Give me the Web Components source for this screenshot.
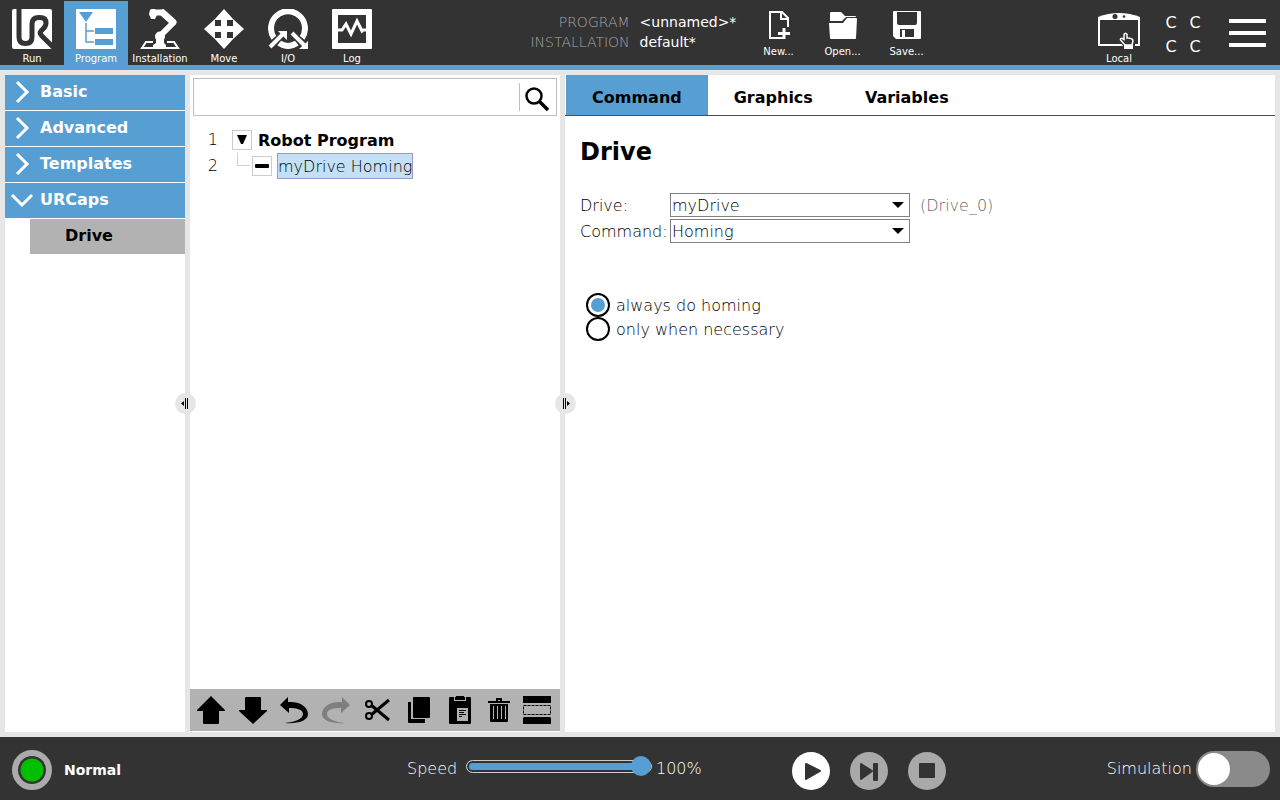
<!DOCTYPE html>
<html lang="en">
<head>
<meta charset="utf-8">
<title>Program - Drive</title>
<style>
  html, body {
    height: 100%;
    margin: 0;
  }
  body {
    --blue: #579fd3;
    --dark: #333333;
    --grey: #b2b2b2;
    --panel-bg: #e6e6e6;
    font-family: "DejaVu Sans", sans-serif;
    font-size: 16px;
    line-height: 20px;
    color: #000;
  }
</style>
</head>
<body>
<robot-app></robot-app>

<script>
// One tab of the main navigation: icon slot + caption
class NavTab extends HTMLElement {
  connectedCallback() {
    this.attachShadow({ mode: 'open' });
    this.shadowRoot.innerHTML = `
      <style>
        :host {
          display: block;
          width: 64px;
        }
        button {
          display: flex;
          flex-direction: column;
          align-items: center;
          width: 100%;
          height: 100%;
          border: 0;
          padding: 8px 0 0;
          background: none;
          color: #fff;
          font: 10px/12px "DejaVu Sans", sans-serif;
          white-space: nowrap;
          cursor: pointer;
        }
        :host([active]) button {
          background: var(--blue);
        }
        .icon {
          flex-shrink: 0;
          height: 44px;
        }
        :host([small]) .icon {
          height: 37px;
        }
      </style>
      <button type="button"><span class="icon"><slot name="icon"></slot></span><slot></slot></button>
    `;
  }
}
customElements.define('nav-tab', NavTab);

class AppHeader extends HTMLElement {
  connectedCallback() {
    this.attachShadow({ mode: 'open' });
    this.shadowRoot.innerHTML = `
      <style>
        :host {
          display: flex;
          justify-content: space-between;
          height: 64px;
          padding: 1px 1px 0 0;
          background: var(--dark);
          border-bottom: 5px solid var(--blue);
          color: #fff;
        }
        nav, .middle, .right {
          display: flex;
        }
        .middle {
          padding-right: 2px;
        }
        svg {
          display: block;
        }
        .info {
          display: grid;
          grid-template-columns: auto minmax(107px, auto);
          grid-auto-rows: 20px;
          column-gap: 10px;
          margin: 0;
          padding-top: 11px;
          font-size: 14px;
          font-weight: 200;
        }
        dt {
          color: #a6a6a6;
          text-align: right;
        }
        dd {
          margin: 0;
          font-weight: 400;
        }
        .checksum {
          display: grid;
          grid-template-columns: 24px 24px;
          grid-auto-rows: 24px;
          place-content: center;
          padding-top: 3px;
          place-items: center;
          width: 64px;
          box-sizing: border-box;
        }
        .menu {
          width: 64px;
          border: 0;
          padding: 0;
          background: none;
          display: grid;
          place-items: center;
          cursor: pointer;
        }
      </style>
      <nav>
        <nav-tab>
          <svg slot="icon" width="40" height="40" viewBox="0 0 40 40">
            <rect width="40" height="40" rx="2" fill="#fff"/>
            <path d="M7 0V28Q7 34.500 13.500 34.500T20 28V15Q20 8.500 27 8.500H28Q34 8.500 34 14Q34 17 31 20L29 22Q27 24.500 30 27L41 38" fill="none" stroke="#333" stroke-width="5"/>
          </svg>Run
        </nav-tab>
        <nav-tab active>
          <svg slot="icon" width="40" height="40" viewBox="0 0 40 40">
            <rect width="40" height="40" fill="#fff"/>
            <path d="M3 3H17L10 13Z" fill="#579fd3"/>
            <path d="M10 14V33H18M10 22H18" fill="none" stroke="#579fd3" stroke-width="1.500"/>
            <path d="M19 19H37V25H19ZM19 30H37V36H19Z" fill="#579fd3"/>
          </svg>Program
        </nav-tab>
        <nav-tab>
          <svg slot="icon" width="40" height="40" viewBox="0 0 40 40">
            <path d="M13 33H6L2 39H38L34 33H27" fill="none" stroke="#fff" stroke-width="2"/>
            <path d="M13 3.500H24" stroke="#fff" stroke-width="6"/>
            <path d="M10 1Q12 -1 15 0L17 6L15 10H11L9 5Z" fill="#fff"/>
            <path d="M23 4L33 13" stroke="#fff" stroke-width="7" stroke-linecap="round"/>
            <path d="M33 14L20 27" stroke="#fff" stroke-width="6" stroke-linecap="round"/>
            <circle cx="20" cy="27.500" r="5" fill="#fff"/>
            <path d="M16 28H24V34L26 36V39H13V36L16 34Z" fill="#fff"/>
          </svg>Installation
        </nav-tab>
        <nav-tab>
          <svg slot="icon" width="40" height="40" viewBox="0 0 40 40">
            <path d="M20 0L30 11H10ZM20 40L10 29H30ZM0 20L11 10V30ZM40 20L29 30V10Z" fill="#fff"/>
            <path d="M20 8V32M8 20H32" stroke="#fff" stroke-width="6"/>
          </svg>Move
        </nav-tab>
        <nav-tab>
          <svg slot="icon" width="40" height="40" viewBox="0 0 40 40">
            <path d="M6 29A17 17 0 1 1 34 29M11 34Q20 40 29 34" fill="none" stroke="#fff" stroke-width="6"/>
            <path d="M2 38L13 27M24 24L35 35" stroke="#333" stroke-width="7"/>
            <path d="M2 38L15 25M24 24L36 36" stroke="#fff" stroke-width="4"/>
            <path d="M10 22H19V31ZM40 32V40H31Z" fill="#fff"/>
          </svg>I/O
        </nav-tab>
        <nav-tab>
          <svg slot="icon" width="40" height="40" viewBox="0 0 40 40">
            <rect width="40" height="40" rx="1" fill="#fff"/>
            <rect x="6" y="6" width="28" height="28" fill="#333"/>
            <path d="M5 21H10L14 15L19 25L25 12L30 22L31 21H35" fill="none" stroke="#fff" stroke-width="3"/>
          </svg>Log
        </nav-tab>
      </nav>
      <div class="middle">
        <dl class="info">
          <dt>PROGRAM</dt><dd>&lt;unnamed&gt;*</dd>
          <dt>INSTALLATION</dt><dd>default*</dd>
        </dl>
        <nav-tab small>
          <svg slot="icon" width="28" height="34" viewBox="0 0 28 34">
            <path d="M18 29H5V3H17L23 9V18" fill="none" stroke="#fff" stroke-width="2"/>
            <path d="M16 3V10H23" fill="none" stroke="#fff" stroke-width="2"/>
            <path d="M19 19V30M13 24.500H25" stroke="#fff" stroke-width="3"/>
          </svg>New...
        </nav-tab>
        <nav-tab small>
          <svg slot="icon" width="28" height="34" viewBox="0 0 28 34">
            <path d="M1 4Q1 3 2 3H12L16 7H26Q27 7 27 8L17 8L13 12H1Z" fill="#fff"/>
            <path d="M0 14H14L18 9H27Q28 9 28 10L27 29Q27 30 26 30H2Q1 30 1 29Z" fill="#fff"/>
          </svg>Open...
        </nav-tab>
        <nav-tab small>
          <svg slot="icon" width="28" height="34" viewBox="0 0 28 34">
            <path d="M0 3Q0 2 1 2H27Q28 2 28 3V29Q28 30 27 30H3L0 27Z" fill="#fff"/>
            <path d="M4 3H24V14Q24 16 22 16H6Q4 16 4 14ZM7 20H21V28H7Z" fill="#333"/>
            <rect x="9" y="21" width="3" height="7" fill="#fff"/>
          </svg>Save...
        </nav-tab>
      </div>
      <div class="right">
        <nav-tab>
          <svg slot="icon" width="42" height="40" viewBox="0 0 42 40">
            <path d="M0 8Q10 4 21 4T42 8V11H0Z" fill="#fff"/>
            <path d="M1 9V36H41V9" fill="none" stroke="#fff" stroke-width="2"/>
            <circle cx="17" cy="7.500" r="2.500" fill="#333"/>
            <circle cx="26" cy="7.500" r="1.300" fill="#333"/>
            <path d="M27 38L22 31L23 28L25 28V25Q27 22 30 25V28L36 31V36L34 38Z" fill="#333" stroke="#333" stroke-width="2"/>
            <path d="M27 36L22.500 31Q22 28 26 30.500V25.500Q27.500 23 29 25.500V29Q35 29 35 32L34 36Z" fill="#333" stroke="#fff" stroke-width="1.500"/>
            <path d="M26 36H35V40H26Z" fill="#fff"/>
          </svg>Local
        </nav-tab>
        <div class="checksum"><span>C</span><span>C</span><span>C</span><span>C</span></div>
        <button class="menu" type="button" aria-label="Menu">
          <svg width="37" height="28" viewBox="0 0 37 28">
            <path d="M0 2H37M0 14H37M0 26H37" stroke="#fff" stroke-width="4"/>
          </svg>
        </button>
      </div>
    `;
  }
}
customElements.define('app-header', AppHeader);

class NodeGroup extends HTMLElement {
  connectedCallback() {
    this.attachShadow({ mode: 'open' });
    this.shadowRoot.innerHTML = `
      <style>
        :host {
          display: block;
          margin-bottom: 1px;
        }
        button {
          display: flex;
          align-items: center;
          gap: 6px;
          width: 100%;
          height: 35px;
          border: 0;
          padding: 0 0 2px 5px;
          background: var(--blue);
          color: #fff;
          font: bold 16px/20px "DejaVu Sans", sans-serif;
          cursor: pointer;
        }
        :host([open]) svg {
          transform: rotate(90deg);
        }
      </style>
      <button type="button">
        <svg width="24" height="24" viewBox="0 0 24 24">
          <path d="M7 2L17 12L7 22" fill="none" stroke="#fff" stroke-width="3"/>
        </svg><slot></slot>
      </button>
    `;
  }
}
customElements.define('node-group', NodeGroup);

class NodeSidebar extends HTMLElement {
  connectedCallback() {
    this.attachShadow({ mode: 'open' });
    this.shadowRoot.innerHTML = `
      <style>
        :host {
          display: block;
          background: #fff;
        }
        .node {
          display: block;
          box-sizing: border-box;
          width: calc(100% - 25px);
          height: 35px;
          margin-left: 25px;
          border: 0;
          padding: 0 0 2px 35px;
          background: var(--grey);
          color: #000;
          font: bold 16px/20px "DejaVu Sans", sans-serif;
          text-align: left;
          cursor: pointer;
        }
      </style>
      <node-group>Basic</node-group>
      <node-group>Advanced</node-group>
      <node-group>Templates</node-group>
      <node-group open>URCaps</node-group>
      <button class="node" type="button">Drive</button>
    `;
  }
}
customElements.define('node-sidebar', NodeSidebar);

class TreeToolbar extends HTMLElement {
  connectedCallback() {
    this.attachShadow({ mode: 'open' });
    this.shadowRoot.innerHTML = `
      <style>
        :host {
          display: flex;
          justify-content: space-between;
          align-items: center;
          height: 42px;
          padding: 0 9px 0 7px;
          background: var(--grey);
        }
        button {
          border: 0;
          padding: 0;
          background: none;
          color: #000;
          cursor: pointer;
        }
        button:disabled {
          color: #7f7f7f;
        }
        svg {
          display: block;
          fill: currentColor;
        }
      </style>
      <button type="button" aria-label="Move up">
        <svg width="28" height="28" viewBox="0 0 28 28"><path d="M14 0L28 14V15H22V27Q22 28 21 28H7Q6 28 6 27V15H0V14Z"/></svg>
      </button>
      <button type="button" aria-label="Move down">
        <svg width="28" height="28" viewBox="0 0 28 28"><path d="M14 28L0 15V14H6V2Q6 1 7 1H21Q22 1 22 2V14H28V15Z"/></svg>
      </button>
      <button type="button" aria-label="Undo">
        <svg width="28" height="28" viewBox="0 0 28 28"><path d="M0 9L8 1V6C20 5 28 11 28 18C28 25 17 28 5 27C15 26 23 23 23 18C23 13 16 12 9 12V17Z"/></svg>
      </button>
      <button type="button" aria-label="Redo" disabled>
        <svg width="28" height="28" viewBox="0 0 28 28"><path d="M28 9L20 1V6C8 5 0 11 0 18C0 25 11 28 23 27C13 26 5 23 5 18C5 13 12 12 19 12V17Z"/></svg>
      </button>
      <button type="button" aria-label="Cut">
        <svg width="28" height="28" viewBox="0 0 28 28">
          <path d="M8 9L26 24M8 19L26 4" stroke="currentColor" stroke-width="3"/>
          <circle cx="6" cy="8" r="3" fill="none" stroke="currentColor" stroke-width="2"/>
          <circle cx="6" cy="20" r="3" fill="none" stroke="currentColor" stroke-width="2"/>
        </svg>
      </button>
      <button type="button" aria-label="Copy">
        <svg width="28" height="28" viewBox="0 0 28 28"><path d="M8 2Q8 1 9 1H24Q25 1 25 2V21Q25 22 24 22H9Q8 22 8 21ZM3 6H6V23H20V27H4Q3 27 3 26Z"/></svg>
      </button>
      <button type="button" aria-label="Paste">
        <svg width="28" height="28" viewBox="0 0 28 28">
          <path d="M3 2Q3 1 4 1H8V5H20V1H24Q25 1 25 2V27Q25 28 24 28H4Q3 28 3 27Z"/>
          <path d="M10 0H18V1H19V4H9V1H10Z"/>
          <path d="M11 12H22V25H11Z" fill="#b2b2b2"/>
          <path d="M13 14.500H20M13 16.500H18M13 18.500H20M13 20.500H16" stroke="#000"/>
        </svg>
      </button>
      <button type="button" aria-label="Delete">
        <svg width="22" height="28" viewBox="0 0 22 28">
          <path d="M0 5H8V2H14V5H22V7H0ZM10 4V5H12V4ZM2 8H20V25Q20 26 19 26H3Q2 26 2 25Z"/>
          <path d="M5.500 10V23M9.500 10V23M13.500 10V23M17.500 10V23" stroke="#b2b2b2"/>
        </svg>
      </button>
      <button type="button" aria-label="Suppress">
        <svg width="28" height="28" viewBox="0 0 28 28">
          <path d="M0 0H28V7H0ZM1 21H27L28 22V28H0V22Z"/>
          <rect x="0.500" y="9.500" width="27" height="9" fill="none" stroke="currentColor" stroke-dasharray="3 1"/>
        </svg>
      </button>
    `;
  }
}
customElements.define('tree-toolbar', TreeToolbar);

class ProgramTree extends HTMLElement {
  connectedCallback() {
    this.attachShadow({ mode: 'open' });
    this.shadowRoot.innerHTML = `
      <style>
        :host {
          display: flex;
          flex-direction: column;
          padding-bottom: 1px;
          background: #fff;
        }
        .search {
          display: flex;
          align-items: center;
          height: 36px;
          margin: 3px 3px 11px;
          border: 1px solid #bfbfbf;
        }
        input {
          flex: 1;
          min-width: 0;
          height: 28px;
          box-sizing: border-box;
          border: 0;
          border-right: 1px solid #bfbfbf;
          padding: 0 8px;
          outline: 0;
          background: none;
          font: 200 16px/20px "DejaVu Sans", sans-serif;
        }
        .search button {
          width: 36px;
          height: 36px;
          border: 0;
          padding: 5px 0 0;
          background: none;
        }
        ol {
          flex: 1;
          margin: 0;
          padding: 0;
          list-style: none;
        }
        li {
          display: flex;
          align-items: center;
          height: 26px;
        }
        .line {
          width: 28px;
          margin-right: 14px;
          text-align: right;
          font-weight: 200;
        }
        .toggle {
          display: grid;
          place-items: center;
          box-sizing: border-box;
          width: 20px;
          height: 20px;
          border: 1px solid #ccc;
          padding: 0;
          background: #fff;
        }
        .branch {
          align-self: flex-start;
          width: 13px;
          height: 13px;
          margin: 0 2px 0 5px;
          border: solid #ccccff;
          border-width: 0 0 1px 1px;
          box-sizing: border-box;
        }
        .root {
          margin-left: 6px;
          padding-top: 2px;
          font-weight: bold;
        }
        .selected {
          box-sizing: border-box;
          height: 26px;
          margin-left: 5px;
          border: 1px solid #9999cc;
          padding: 3px 0 1px;
          background: #c3e0f5;
          font-weight: 200;
        }
        svg {
          display: block;
        }
      </style>
      <form class="search">
        <input type="search" aria-label="Search program">
        <button type="button" aria-label="Search">
          <svg width="34" height="28" viewBox="0 0 34 28">
            <circle cx="14" cy="10" r="7.500" fill="none" stroke="#000" stroke-width="2.500"/>
            <path d="M19 15L28 24" stroke="#000" stroke-width="3.500"/>
          </svg>
        </button>
      </form>
      <ol>
        <li>
          <span class="line">1</span>
          <button class="toggle" type="button" aria-label="Collapse">
            <svg width="10" height="10" viewBox="0 0 10 10"><path d="M0 0H10L6 9H4Z"/></svg>
          </button>
          <span class="root">Robot Program</span>
        </li>
        <li>
          <span class="line">2</span>
          <span class="branch"></span>
          <span class="toggle"><svg width="14" height="4" viewBox="0 0 14 4"><rect width="14" height="4" rx="1"/></svg></span>
          <span class="selected">myDrive Homing</span>
        </li>
      </ol>
      <tree-toolbar></tree-toolbar>
    `;
  }
}
customElements.define('program-tree', ProgramTree);

// Labelled drop-down, options come from the "options" attribute
class SelectRow extends HTMLElement {
  connectedCallback() {
    const options = this.getAttribute('options').split(',');
    this.attachShadow({ mode: 'open' });
    this.shadowRoot.innerHTML = `
      <style>
        :host {
          display: flex;
          align-items: center;
          height: 24px;
          margin-bottom: 2px;
          font-weight: 200;
        }
        label {
          width: 90px;
          padding-top: 2px;
        }
        .box {
          position: relative;
          width: 240px;
          margin-right: 10px;
        }
        select {
          display: block;
          appearance: none;
          width: 100%;
          height: 24px;
          box-sizing: border-box;
          border: 1px solid #808080;
          border-radius: 0;
          padding: 2px 24px 0 1px;
          background: #fff;
          color: #000;
          font: 200 16px/20px "DejaVu Sans", sans-serif;
        }
        svg {
          position: absolute;
          right: 6px;
          top: 9px;
          pointer-events: none;
        }
        .note {
          padding-top: 2px;
          color: #666;
        }
      </style>
      <label for="field">${this.getAttribute('label')}</label>
      <div class="box">
        <select id="field">${options.map(o => `<option>${o}</option>`).join('')}</select>
        <svg width="12" height="6" viewBox="0 0 12 6"><path d="M0 0H12L6 6Z"/></svg>
      </div>
      <span class="note"><slot></slot></span>
    `;
  }
}
customElements.define('select-row', SelectRow);

class CommandPanel extends HTMLElement {
  connectedCallback() {
    this.attachShadow({ mode: 'open' });
    this.shadowRoot.innerHTML = `
      <style>
        :host {
          display: block;
          background: #fff;
        }
        .tabs {
          display: flex;
          height: 40px;
          padding-left: 1px;
          border-bottom: 1px solid #4d4d4d;
        }
        .tabs button {
          border: 0;
          padding: 6px 26px 0;
          background: none;
          color: #000;
          font: bold 16px/20px "DejaVu Sans", sans-serif;
          cursor: pointer;
        }
        .tabs .active {
          background: var(--blue);
        }
        .content {
          padding: 20px 15px;
        }
        h1 {
          margin: 0 0 25px;
          font-size: 24px;
          line-height: 32px;
        }
        fieldset {
          margin: 48px 0 0;
          border: 0;
          padding: 2px 6px;
          font-weight: 200;
        }
        fieldset label {
          display: flex;
          align-items: center;
          gap: 6px;
          height: 24px;
        }
        fieldset span {
          padding-top: 2px;
        }
        input {
          appearance: none;
          display: grid;
          place-items: center;
          box-sizing: border-box;
          width: 24px;
          height: 24px;
          margin: 0;
          border: 2px solid #000;
          border-radius: 50%;
        }
        input:checked::before {
          content: "";
          width: 14px;
          height: 14px;
          border-radius: 50%;
          background: var(--blue);
        }
      </style>
      <div class="tabs">
        <button class="active" type="button">Command</button>
        <button type="button">Graphics</button>
        <button type="button">Variables</button>
      </div>
      <div class="content">
        <h1>Drive</h1>
        <select-row label="Drive:" options="myDrive">(Drive_0)</select-row>
        <select-row label="Command:" options="Homing"></select-row>
        <fieldset>
          <label><input type="radio" name="homing" checked><span>always do homing</span></label>
          <label><input type="radio" name="homing"><span>only when necessary</span></label>
        </fieldset>
      </div>
    `;
  }
}
customElements.define('command-panel', CommandPanel);

// Round grip on the edge of a side panel
class PanelGrip extends HTMLElement {
  connectedCallback() {
    this.attachShadow({ mode: 'open' });
    this.shadowRoot.innerHTML = `
      <style>
        :host {
          display: block;
          position: relative;
        }
        button {
          position: absolute;
          top: 50%;
          left: 0;
          width: 21px;
          height: 21px;
          margin: -11px -10px 0;
          border: 0;
          border-radius: 50%;
          padding: 5px;
          background: var(--panel-bg);
          z-index: 1;
        }
        :host([flip]) button {
          left: 100%;
        }
        :host([flip]) svg {
          transform: scaleX(-1);
        }
        svg {
          display: block;
        }
      </style>
      <button type="button" aria-label="Collapse panel">
        <svg width="11" height="11" viewBox="0 0 11 11"><path d="M1 5.500L4 3V8ZM5 0H6V11H5ZM7 0H8V11H7Z"/></svg>
      </button>
    `;
  }
}
customElements.define('panel-grip', PanelGrip);

class AppFooter extends HTMLElement {
  connectedCallback() {
    this.attachShadow({ mode: 'open' });
    this.shadowRoot.innerHTML = `
      <style>
        :host {
          display: grid;
          grid-template-columns: 395fr 385fr 478fr;
          align-items: center;
          height: 63px;
          padding: 0 10px 0 12px;
          background: var(--dark);
          color: #fff;
          font-weight: 200;
        }
        .status, .speed, .right, .controls, .sim {
          display: flex;
          align-items: center;
        }
        .status {
          gap: 12px;
          padding-top: 3px;
          font-size: 14px;
          font-weight: bold;
        }
        .speed label {
          width: 59px;
        }
        .speed output {
          margin-left: 4px;
        }
        .range {
          appearance: none;
          width: 186px;
          height: 20px;
          margin: 0 0 4px;
          background: none;
        }
        .range::-webkit-slider-runnable-track {
          box-sizing: border-box;
          height: 13px;
          border: 1px solid #ccc;
          border-radius: 7px;
          background: var(--blue);
          box-shadow: inset 0 0 0 2px var(--dark);
        }
        .range::-webkit-slider-thumb {
          appearance: none;
          width: 20px;
          height: 20px;
          margin: -5px -1px 0 0;
          border-radius: 50%;
          background: var(--blue);
        }
        .right {
          justify-content: space-between;
        }
        .controls {
          gap: 20px;
          padding-top: 4px;
        }
        .controls button {
          width: 38px;
          height: 38px;
          border: 0;
          border-radius: 50%;
          padding: 0;
          background: #fff;
        }
        .controls button:disabled {
          background: #a9a9a9;
        }
        svg {
          display: block;
        }
        .sim {
          gap: 4px;
        }
        .switch {
          appearance: none;
          box-sizing: border-box;
          width: 74px;
          height: 36px;
          margin: 0;
          border-radius: 18px;
          padding: 2px;
          background: #8a8a8a;
        }
        .switch::before {
          content: "";
          display: block;
          width: 32px;
          height: 32px;
          border-radius: 50%;
          background: #fff;
        }
      </style>
      <div class="status">
        <svg width="40" height="40" viewBox="0 0 40 40">
          <circle cx="20" cy="20" r="17" fill="#333" stroke="#ababab" stroke-width="6"/>
          <circle cx="20" cy="20" r="11.500" fill="#00bf00"/>
        </svg>
        <span>Normal</span>
      </div>
      <div class="speed">
        <label for="speed">Speed</label>
        <input class="range" id="speed" type="range" min="0" max="100" value="100">
        <output for="speed">100%</output>
      </div>
      <div class="right">
        <div class="controls">
          <button type="button" aria-label="Play">
            <svg width="38" height="38" viewBox="0 0 38 38"><path d="M14 12L28 19L14 27Z" fill="#333" stroke="#333" stroke-width="2" stroke-linejoin="round"/></svg>
          </button>
          <button type="button" aria-label="Step" disabled>
            <svg width="38" height="38" viewBox="0 0 38 38"><path d="M11 12L22 19L11 27ZM24 12H27V28H24Z" fill="#333" stroke="#333" stroke-width="2" stroke-linejoin="round"/></svg>
          </button>
          <button type="button" aria-label="Stop" disabled>
            <svg width="38" height="38" viewBox="0 0 38 38"><rect x="11" y="11" width="16" height="15" rx="1" fill="#333"/></svg>
          </button>
        </div>
        <div class="sim">
          <label for="sim">Simulation</label>
          <input class="switch" id="sim" type="checkbox">
        </div>
      </div>
    `;
  }
}
customElements.define('app-footer', AppFooter);

class RobotApp extends HTMLElement {
  connectedCallback() {
    this.attachShadow({ mode: 'open' });
    this.shadowRoot.innerHTML = `
      <style>
        :host {
          display: flex;
          flex-direction: column;
          min-height: 100vh;
          background: var(--panel-bg);
        }
        main {
          flex: 1;
          display: grid;
          grid-template-columns: 180px 5px 370px 5px 1fr;
          padding: 5px;
        }
      </style>
      <app-header></app-header>
      <main>
        <node-sidebar></node-sidebar>
        <panel-grip></panel-grip>
        <program-tree></program-tree>
        <panel-grip flip></panel-grip>
        <command-panel></command-panel>
      </main>
      <app-footer></app-footer>
    `;
  }
}
customElements.define('robot-app', RobotApp);
</script>
</body>
</html>
